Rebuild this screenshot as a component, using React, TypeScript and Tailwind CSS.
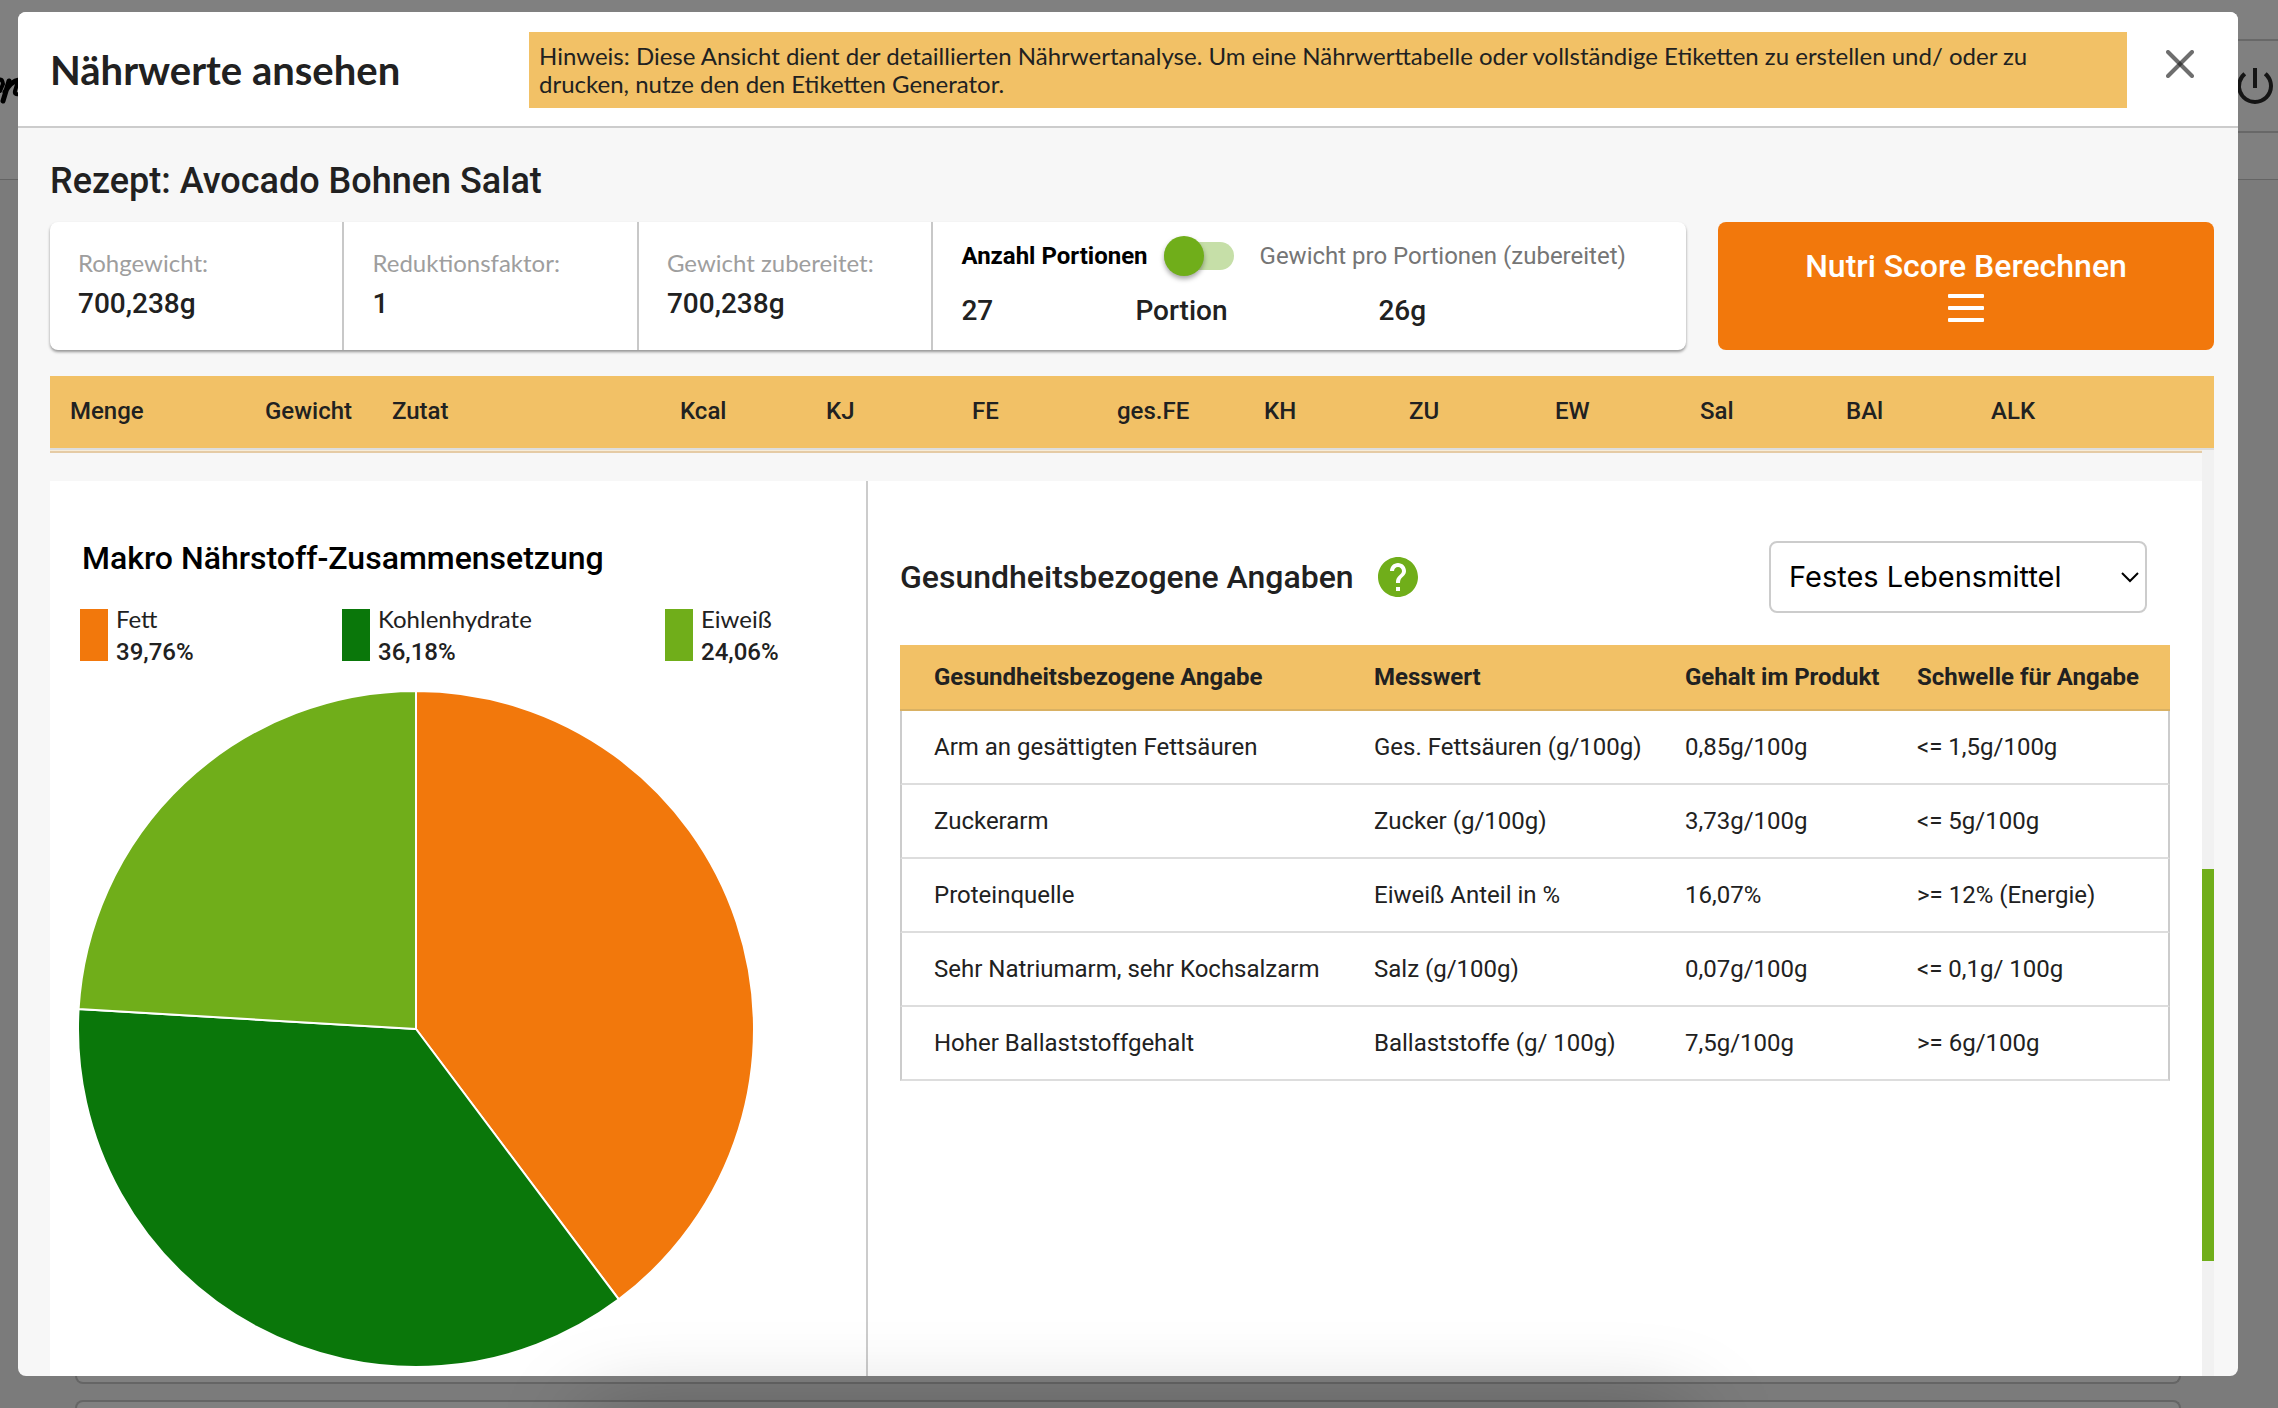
import React, { useState } from 'react';
import { MdHelp, MdPowerSettingsNew } from 'react-icons/md';

interface Slice {
  label: string;
  value: number;
  color: string;
  swatch: string;
}

interface Claim {
  name: string;
  measure: string;
  content: string;
  threshold: string;
}

const slices: Slice[] = [
  { label: 'Fett', value: 39.76, color: '#f2780c', swatch: 'bg-[#f2780c]' },
  { label: 'Kohlenhydrate', value: 36.18, color: '#0a770a', swatch: 'bg-[#0a770a]' },
  { label: 'Eiweiß', value: 24.06, color: '#70ae1a', swatch: 'bg-[#70ae1a]' },
];

const claims: Claim[] = [
  { name: 'Arm an gesättigten Fettsäuren', measure: 'Ges. Fettsäuren (g/100g)', content: '0,85g/100g', threshold: '<= 1,5g/100g' },
  { name: 'Zuckerarm', measure: 'Zucker (g/100g)', content: '3,73g/100g', threshold: '<= 5g/100g' },
  { name: 'Proteinquelle', measure: 'Eiweiß Anteil in %', content: '16,07%', threshold: '>= 12% (Energie)' },
  { name: 'Sehr Natriumarm, sehr Kochsalzarm', measure: 'Salz (g/100g)', content: '0,07g/100g', threshold: '<= 0,1g/ 100g' },
  { name: 'Hoher Ballaststoffgehalt', measure: 'Ballaststoffe (g/ 100g)', content: '7,5g/100g', threshold: '>= 6g/100g' },
];

const weights = [
  { label: 'Rohgewicht:', value: '700,238g' },
  { label: 'Reduktionsfaktor:', value: '1' },
  { label: 'Gewicht zubereitet:', value: '700,238g' },
];

const columns = [
  { name: 'Menge', width: 'w-[215px]' },
  { name: 'Gewicht', width: 'w-[127px]' },
  { name: 'Zutat', width: 'w-[288px]' },
  { name: 'Kcal', width: 'w-[146px]' },
  { name: 'KJ', width: 'w-[146px]' },
  { name: 'FE', width: 'w-[145px]' },
  { name: 'ges.FE', width: 'w-[147px]' },
  { name: 'KH', width: 'w-[145px]' },
  { name: 'ZU', width: 'w-[146px]' },
  { name: 'EW', width: 'w-[145px]' },
  { name: 'Sal', width: 'w-[146px]' },
  { name: 'BAl', width: 'w-[145px]' },
  { name: 'ALK', width: 'w-[223px]' },
];

const formatPercent = (value: number) => `${value.toFixed(2).replace('.', ',')}%`;

const PieChart: React.FC<{ data: Slice[] }> = ({ data }) => {
  const r = 338;
  const point = (share: number) => {
    const angle = (share / 100) * 2 * Math.PI;
    return `${(r + r * Math.sin(angle)).toFixed(2)} ${(r - r * Math.cos(angle)).toFixed(2)}`;
  };

  let sum = 0;
  return (
    <svg viewBox="0 0 676 676" className="block h-[676px] w-[676px]" role="img" aria-label="Makro Nährstoffe">
      {data.map((slice) => {
        const from = sum;
        sum += slice.value;
        const large = slice.value > 50 ? 1 : 0;
        return (
          <path
            key={slice.label}
            d={`M${r} ${r}L${point(from)}A${r} ${r} 0 ${large} 1 ${point(sum)}Z`}
            fill={slice.color}
            stroke="#fff"
            strokeWidth="2"
          />
        );
      })}
    </svg>
  );
};

const PageBackdrop: React.FC = () => (
  <div className="absolute inset-0 flex flex-col bg-[#7b7b7b]" aria-hidden="true">
    <div className="flex h-[180px] shrink-0 flex-col border-b border-[#646464] bg-[#808080] pt-[39px]">
      <div className="flex h-[94px] items-start justify-between">
        {/* Schriftzug, vom Dialog fast verdeckt */}
        <svg viewBox="0 0 24 32" className="mt-[38px] h-8 w-6" fill="none" stroke="#000" strokeLinecap="round">
          <path d="M-2 4Q2 0 3 7L0 14" strokeWidth="4" />
          <path d="M9 4 3 24M5 15Q11 4 19 3" strokeWidth="5" />
          <path d="M18 4 15 14Q14 18 19 17" strokeWidth="4" />
        </svg>
        <div className="flex h-[94px] w-12 -mr-px items-start border-y-2 border-[#686868]">
          <MdPowerSettingsNew className="mt-[21px] size-12 text-[#151515]" />
        </div>
      </div>
    </div>
    <div className="mt-auto mr-[97px] ml-[75px] h-6 shrink-0 rounded-b-lg border-2 border-t-0 border-[#656565] bg-[#808080]" />
    <div className="mt-4 mr-[97px] ml-[75px] h-2 shrink-0 rounded-t-lg border-2 border-b-0 border-[#656565] bg-[#808080]" />
  </div>
);

const DialogHeader: React.FC = () => (
  <header className="flex h-[116px] shrink-0 items-start border-b-2 border-[#cccccc] bg-white pl-8">
    <h1 className="mt-[34px] w-[479px] shrink-0 font-[Lato,sans-serif] text-[40px] leading-[48px] font-bold">
      Nährwerte ansehen
    </h1>
    <p className="mt-5 flex-1 bg-[#f2c166] p-[10px] font-[Lato,sans-serif] text-2xl leading-7">
      Hinweis: Diese Ansicht dient der detaillierten Nährwertanalyse. Um eine Nährwerttabelle oder vollständige
      Etiketten zu erstellen und/ oder zu drucken, nutze den den Etiketten Generator.
    </p>
    <button type="button" aria-label="Schließen" className="mt-[30px] mr-9 ml-[31px] p-2">
      <svg viewBox="0 0 28 28" className="block size-7" stroke="#212121" strokeOpacity="0.65" strokeWidth="4" strokeLinecap="round">
        <path d="M2 2 26 26" />
        <path d="M26 2 2 26" />
      </svg>
    </button>
  </header>
);

const SummaryBar: React.FC = () => {
  const [perWeight, setPerWeight] = useState(false);

  return (
    <div className="mt-5 flex h-32 gap-8">
      <div className="flex flex-1 rounded-lg bg-white shadow-[0_2px_3px_rgba(0,0,0,0.4)]">
        {weights.map((weight) => (
          <div key={weight.label} className="w-[18%] border-r-2 border-[#c8c8c8] pt-6 pl-7">
            <p className="font-[Lato,sans-serif] text-2xl leading-[34px] text-[#9e9e9e]">{weight.label}</p>
            <p className="text-[28px] leading-[48px] font-medium">{weight.value}</p>
          </div>
        ))}
        <div className="flex-1 pl-7">
          <div className="flex h-[68px] items-center text-2xl">
            <span className="font-bold text-black">Anzahl Portionen</span>
            <label className="relative ml-4 block h-7 w-[70px]">
              <input
                type="checkbox"
                checked={perWeight}
                onChange={(e) => setPerWeight(e.target.checked)}
                aria-label="Gewicht pro Portionen"
                className="peer absolute inset-0 m-0 h-7 w-[70px] cursor-pointer appearance-none rounded-full bg-[#c6dfa8]"
              />
              <span className="pointer-events-none absolute -top-[6px] left-0 size-10 rounded-full bg-[#70ae1a] shadow-[0_3px_5px_rgba(0,0,0,0.35)] peer-checked:left-[30px]" />
            </label>
            <span className="ml-[26px] text-[#757575]">Gewicht pro Portionen (zubereitet)</span>
          </div>
          <div className="flex text-[28px] leading-[42px] font-medium">
            <span className="w-[174px]">27</span>
            <span className="w-[243px]">Portion</span>
            <span>26g</span>
          </div>
        </div>
      </div>
      <button
        type="button"
        className="flex w-[496px] flex-col items-center rounded-lg bg-[#f2780c] pt-6 text-[32px] leading-10 font-medium text-white"
      >
        Nutri Score Berechnen
        <svg viewBox="0 0 36 28" className="mt-2 h-7 w-9" fill="currentColor">
          <rect width="36" height="4" rx="1" />
          <rect y="12" width="36" height="4" rx="1" />
          <rect y="24" width="36" height="4" rx="1" />
        </svg>
      </button>
    </div>
  );
};

const MacroPanel: React.FC = () => (
  <section className="w-[818px] shrink-0 border-r-2 border-[#cccccc] pl-7">
    <h3 className="mt-[57px] pl-1 text-[32px] leading-10 font-medium text-black">Makro Nährstoff-Zusammensetzung</h3>
    <ul className="mt-[31px] grid grid-cols-[262px_323px_auto] pl-[2px]">
      {slices.map((slice) => (
        <li key={slice.label} className="flex items-start text-2xl">
          <span className={`h-[52px] w-7 ${slice.swatch}`} />
          <span className="-mt-1 ml-2">
            <span className="block h-[33px] font-[Lato,sans-serif] leading-7">{slice.label}</span>
            <span className="block leading-7 font-medium">{formatPercent(slice.value)}</span>
          </span>
        </li>
      ))}
    </ul>
    <div className="mt-[25px]">
      <PieChart data={slices} />
    </div>
  </section>
);

const ClaimsPanel: React.FC = () => (
  <section className="flex-1 px-8">
    <div className="mt-[60px] mr-[23px] flex h-[72px] items-center">
      <h3 className="text-[32px] leading-10 font-medium">Gesundheitsbezogene Angaben</h3>
      <button type="button" aria-label="Hilfe" className="ml-5">
        <MdHelp className="size-12 text-[#70ae1a]" />
      </button>
      <div className="relative ml-auto">
        <select
          aria-label="Art des Lebensmittels"
          className="h-[72px] w-[378px] appearance-none rounded-lg border-2 border-[#cccccc] bg-white pl-[18px] font-[Inter,sans-serif] text-[29px] text-black"
        >
          <option>Festes Lebensmittel</option>
          <option>Flüssiges Lebensmittel</option>
        </select>
        <svg viewBox="0 0 18 11" className="pointer-events-none absolute top-[31px] right-2 h-[11px] w-[18px]">
          <path d="M1 1 9 9 17 1" fill="none" stroke="#000" strokeWidth="2" />
        </svg>
      </div>
    </div>
    <table className="mt-8 w-full table-fixed border-separate border-spacing-0 text-left text-2xl">
      <thead>
        <tr className="bg-[#f2c166]">
          <th className="h-[66px] w-[440px] border-b-2 border-[#d9b163] pl-[34px] font-bold">Gesundheitsbezogene Angabe</th>
          <th className="w-[311px] border-b-2 border-[#d9b163] pl-[34px] font-bold">Messwert</th>
          <th className="w-[232px] border-b-2 border-[#d9b163] pl-[34px] font-bold">Gehalt im Produkt</th>
          <th className="border-b-2 border-[#d9b163] pl-[34px] font-bold">Schwelle für Angabe</th>
        </tr>
      </thead>
      <tbody>
        {claims.map((claim) => (
          <tr key={claim.name}>
            <td className="h-[74px] border-b-2 border-l-2 border-b-[#dddddd] border-l-[#cccccc] pl-8">{claim.name}</td>
            <td className="border-b-2 border-[#dddddd] pl-[34px]">{claim.measure}</td>
            <td className="border-b-2 border-[#dddddd] pl-[34px]">{claim.content}</td>
            <td className="border-r-2 border-b-2 border-r-[#cccccc] border-b-[#dddddd] pl-[34px]">{claim.threshold}</td>
          </tr>
        ))}
      </tbody>
    </table>
  </section>
);

const App: React.FC = () => {
  return (
    <div className="relative flex h-screen flex-col overflow-hidden font-[Roboto,sans-serif] text-[#212121]">
      <PageBackdrop />
      <div
        role="dialog"
        aria-label="Nährwerte ansehen"
        className="relative mt-3 mr-10 mb-8 ml-[18px] flex min-h-0 flex-1 flex-col overflow-hidden rounded-lg bg-[#f7f7f7]"
      >
        <DialogHeader />
        <main className="flex min-h-0 flex-1 flex-col pr-6 pl-8">
          <h2 className="mt-8 text-[36px] leading-[42px] font-medium">Rezept: Avocado Bohnen Salat</h2>
          <SummaryBar />
          <table className="mt-[26px] w-full shrink-0 table-fixed border-separate border-spacing-0 bg-[#f2c166] text-left text-2xl">
            <thead>
              <tr>
                {columns.map((column) => (
                  <th
                    key={column.name}
                    className={`h-[74px] border-b-2 border-[#dddddd] pb-[2px] font-medium first:pl-5 ${column.width}`}
                  >
                    {column.name}
                  </th>
                ))}
              </tr>
            </thead>
          </table>
          <div className="flex min-h-0 flex-1">
            <div className="flex min-w-0 flex-1 flex-col">
              <div className="mb-7 h-[3px] shrink-0 border-t border-[#f7ecd8] bg-[#e5cba5]" />
              <div className="flex min-h-0 flex-1 bg-white">
                <MacroPanel />
                <ClaimsPanel />
              </div>
            </div>
            {/* Scrollleiste */}
            <div className="w-3 shrink-0 bg-[#f1f1f1] pt-[419px]">
              <div className="h-[392px] bg-[#70ae1a]" />
            </div>
          </div>
        </main>
      </div>
      <div className="pointer-events-none absolute top-full right-[590px] left-[590px] mt-2 h-40 shadow-[0_0_90px_rgba(0,0,0,0.28)]" />
    </div>
  );
};

export default App;
